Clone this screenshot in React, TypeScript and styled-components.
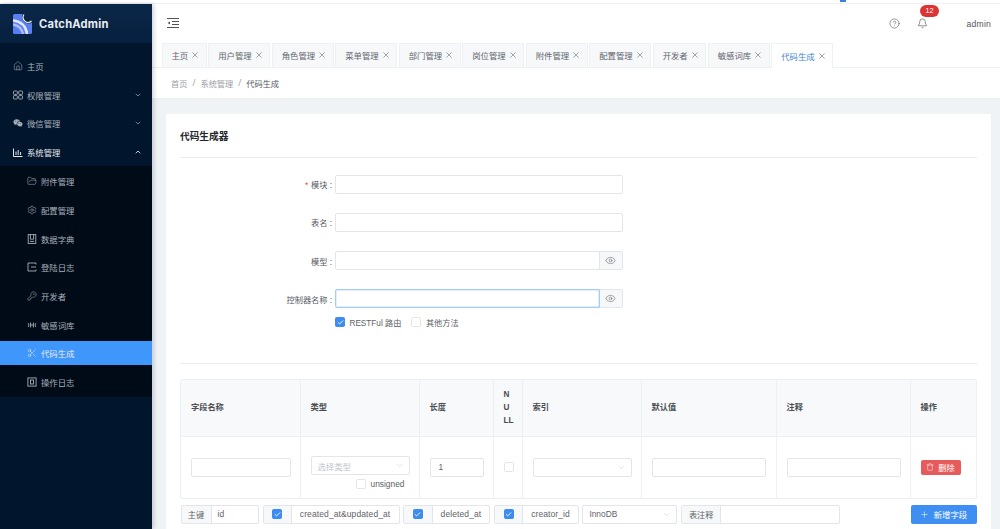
import React from "react";
import styled, { createGlobalStyle } from "styled-components";
import {
  Home, ChevronDown, ChevronUp, FolderOpen, Settings, KeyRound, Scissors,
  CircleHelp, Bell, Eye, Trash, Plus, Check,
} from "lucide-react";
import { RiWechatFill } from "react-icons/ri";

const Global = createGlobalStyle`
  html, body { margin: 0; padding: 0; width: 1000px; height: 529px; overflow: hidden; background: #fff; }
  body { font-family: "Liberation Sans", "Noto Sans CJK SC", sans-serif; font-size: 8.4px; color: #606266; }
  * { box-sizing: border-box; }
`;

const Page = styled.div`
  display: flex; flex-direction: column; width: 1000px; height: 529px; overflow: hidden;
`;
const TopStrip = styled.div`
  position: relative; height: 4px; flex: none; background: #fff; border-bottom: 1px solid #eef1f4;
`;
const TopMark = styled.span`
  position: absolute; left: 840px; top: 0; width: 6px; height: 2px; background: #3f7fdc;
`;
const Body = styled.div`
  flex: 1; display: flex; min-height: 0;
`;
const Sidebar = styled.aside`
  width: 152px; flex: none; background: #01152c; display: flex; flex-direction: column;
  box-shadow: 2px 0 4px rgba(0, 21, 41, .18); z-index: 2;
`;
const Logo = styled.div`
  height: 38.5px; flex: none; display: flex; align-items: center; gap: 7px; padding: 1px 0 0 13px;
  background: linear-gradient(180deg, #0b2747, #06203f);
  color: #e8edf3; font-size: 11.2px; font-weight: 700; letter-spacing: .2px;
  font-family: "Inter", "Liberation Sans", sans-serif;
`;
const Menu = styled.nav`
  display: flex; flex-direction: column; gap: 4.8px; padding-top: 11.4px;
`;
const Item = styled.div<{ $sub?: boolean; $active?: boolean; $open?: boolean }>`
  height: 24px; display: flex; align-items: center; gap: 5px; flex: none;
  padding-left: ${(p) => (p.$sub ? 27 : 13)}px; padding-right: 10px;
  color: ${(p) => (p.$active || p.$open ? "#e6e9ed" : "#a9b0ba")};
  background: ${(p) => (p.$active ? "#3f96fb" : "transparent")};
  svg { flex: none; }
  svg:first-child { width: 10px; height: 10px; margin: 0 -.5px; }
`;
const ItemLabel = styled.span`
  flex: 1; font-size: 8.4px;
`;
const SubMenu = styled.div`
  display: flex; flex-direction: column; gap: 4.7px; padding: 3px 0 3px; margin-top: -2.8px;
  background: #000b18;
`;
const Main = styled.main`
  flex: 1; min-width: 0; display: flex; flex-direction: column; background: #fff;
`;
const Header = styled.header`
  height: 39px; flex: none; display: flex; align-items: center; padding: 0 9px 2px 15px; color: #4f5359;
`;
const HeaderRight = styled.div`
  margin: 2px 0 0 auto; display: flex; align-items: center;
`;
const BellWrap = styled.span`
  position: relative; display: inline-flex; margin: 0 38.5px 0 17.5px;
`;
const Badge = styled.span`
  position: absolute; left: 3px; top: -13px; width: 19px; height: 11.5px; border-radius: 6px;
  background: #dd3333; color: #fff; font-size: 7.4px; display: flex; align-items: center; justify-content: center;
`;
const User = styled.span`
  font-size: 8.6px; color: #53575d; letter-spacing: .2px;
`;
const Tabs = styled.div`
  height: 24.5px; flex: none; display: flex; gap: 1.6px; padding-left: 9.5px;
  border-bottom: 1px solid #eef1f4; background: #fff;
`;
const Tab = styled.div<{ $active?: boolean }>`
  display: flex; align-items: center; gap: 4px; padding: 0 7.4px 0 9px; height: 24.5px;
  background: ${(p) => (p.$active ? "#fff" : "#f6f8fa")};
  border: 1px solid #eef1f4; border-width: 1px 1px ${(p) => (p.$active ? 0 : 1)}px 1px;
  color: ${(p) => (p.$active ? "#3f86d8" : "#61656c")};
  font-size: 8.4px; white-space: nowrap;
  svg { color: #8d9197; flex: none; }
`;
const Crumbs = styled.div`
  height: 31px; flex: none; display: flex; align-items: center; gap: 5px; padding-left: 19px;
  color: #9a9ea5; font-size: 8.2px; border-bottom: 1px solid #eceff3;
`;
const CrumbSep = styled.span`
  font-family: "Noto Sans", sans-serif; line-height: 10px;
`;
const CrumbLast = styled.span`
  color: #55595f;
`;
const Content = styled.div`
  flex: 1; min-height: 0; background: #eff3f6; padding: 15px 9px 0 14px; overflow: hidden;
`;
const Card = styled.section`
  background: #fff; height: 600px; padding: 0 14px;
`;
const CardTitle = styled.h2`
  margin: 0; height: 44.5px; display: flex; align-items: center; padding-top: 1px;
  font-size: 9.7px; font-weight: 700; color: #23262a; border-bottom: 1px solid #ebedf0;
`;
const Form = styled.div`
  display: flex; flex-direction: column; gap: 19.3px; padding: 16.5px 0 0 99.5px;
  height: 206px; border-bottom: 1px solid #ebedf0;
`;
const Row = styled.div`
  display: flex; align-items: center; height: 19px;
`;
const Label = styled.label`
  width: 55.5px; flex: none; text-align: right; padding-right: 3px; white-space: nowrap;
  font-size: 8.2px; color: #55595f;
`;
const Star = styled.span`
  color: #e0555a; margin-right: 3px;
`;
const Input = styled.div<{ $w?: number; $joined?: boolean }>`
  width: ${(p) => (p.$w ? `${p.$w}px` : "287.5px")}; height: 19px; flex: none; background: #fff;
  border: 1px solid #e2e5ea;
  border-radius: ${(p) => (p.$joined ? "2px 0 0 2px" : "2px")};
  display: flex; align-items: center; padding: 0 8px; font-size: 8.4px; color: #5a5e64;
`;
const FocusedInput = styled(Input)`
  border-color: #a3cdf2;
  box-shadow: inset 0 0 0 .5px #c5e0f7;
`;
const EyeAddon = styled.div`
  width: 22.5px; height: 19px; flex: none; background: #f6f8fa; color: #5c6067;
  border: 1px solid #e2e5ea; border-left: 0; border-radius: 0 2px 2px 0;
  display: flex; align-items: center; justify-content: center;
`;
const CheckRow = styled.div`
  display: flex; align-items: center; gap: 4.5px; margin: -11.9px 0 0 55.5px; height: 13px; font-size: 8.2px;
`;
const Box = styled.span<{ $on?: boolean }>`
  width: 10px; height: 10px; flex: none; border-radius: 1.5px; display: inline-flex; align-items: center; justify-content: center;
  background: ${(p) => (p.$on ? "#3f8cf0" : "#fff")}; color: #fff;
  border: 1px solid ${(p) => (p.$on ? "#3f8cf0" : "#e2e5ea")};
`;
const CheckGap = styled.span`
  width: 1px;
`;
const Table = styled.div`
  margin-top: 15px; width: 796.5px; border: 1px solid #edf0f3; border-radius: 2px;
  display: grid; grid-template-columns: 119.5px 119px 74px 29px 119px 135px 134px 66.5px;
`;
const Th = styled.div`
  height: 56.5px; background: #f7f9fb; padding: 0 10px; display: flex; align-items: center;
  font-size: 8.2px; font-weight: 700; color: #4a4d52; line-height: 13px;
  border-right: 1px solid #edf0f3; border-bottom: 1px solid #edf0f3;
  &:last-of-type { border-right: 0; }
`;
const Td = styled.div<{ $last?: boolean }>`
  height: 61.5px; padding: 0 10px; display: flex; flex-direction: column; justify-content: center; align-items: flex-start;
  border-right: ${(p) => (p.$last ? 0 : "1px solid #edf0f3")};
`;
const Select = styled.div<{ $w: number; $tone?: string }>`
  width: ${(p) => p.$w}px; height: 19px; flex: none; border: 1px solid #e2e5ea; border-radius: 2px; background: #fff;
  display: flex; align-items: center; justify-content: space-between; padding: 0 5px 0 6px;
  font-size: 8.4px; color: ${(p) => p.$tone || "#c0c4cc"};
  svg { color: #b4b8bf; }
`;
const Unsigned = styled.div`
  display: flex; align-items: center; gap: 4.5px; align-self: flex-end; margin: 3px 5px 0 0; height: 11px; color: #606266; font-size: 8.4px;
`;
const TypeCell = styled.div`
  display: flex; flex-direction: column; margin-top: 11px;
`;
const DeleteBtn = styled.button`
  width: 40px; height: 15px; padding: 0; border: 0; border-radius: 2px; background: #e65b5b; color: #fff;
  display: flex; align-items: center; justify-content: center; gap: 4px; font: inherit; font-size: 8.2px;
`;
const Bar = styled.div`
  display: flex; align-items: center; gap: 3.6px; margin: 5.5px 0 0 .5px; width: 796px;
`;
const Group = styled.div<{ $w: number }>`
  width: ${(p) => p.$w}px; height: 19px; flex: none; display: flex; border: 1px solid #e2e5ea; border-radius: 2px; overflow: hidden;
`;
const Addon = styled.span<{ $w: number }>`
  width: ${(p) => p.$w}px; flex: none; background: #f6f8fa; border-right: 1px solid #e2e5ea;
  display: flex; align-items: center; justify-content: center; color: #5f6369; font-size: 8.2px;
`;
const GroupText = styled.span<{ $center?: boolean }>`
  flex: 1; display: flex; align-items: center; justify-content: ${(p) => (p.$center ? "center" : "flex-start")};
  padding: 0 6px; font-size: 8.5px; color: #5f6369; letter-spacing: .1px; white-space: nowrap;
`;
const AddBtn = styled.button`
  margin-left: auto; width: 66px; height: 19px; padding: 0; border: 0; border-radius: 2px; background: #3f8ff3; color: #fff;
  display: flex; align-items: center; justify-content: center; gap: 5px; font: inherit; font-size: 8.4px;
`;

const LogoMark = () => (
  <svg width="19" height="20" viewBox="0 0 19 20">
    <rect width="19" height="20" rx="1.5" fill="#5a7ff0" />
    <path d="M0 6.5 C8 7.5 13 12.5 14 20" fill="none" stroke="#dfe8fb" strokeWidth="2.6" />
    <path d="M0 10.5 C5 11.5 9 15 10 20" fill="none" stroke="#aebff5" strokeWidth="2.4" />
    <circle cx="15.5" cy="3" r="6.5" fill="#0a2545" />
    <path d="M11 .5 A5 5 0 0 0 18.5 7" fill="none" stroke="#fff" strokeWidth="1.1" />
  </svg>
);
const GridIcon = () => (
  <svg viewBox="0 0 10 10" fill="none" stroke="currentColor" strokeWidth=".9">
    <rect x=".5" y="1" width="3.8" height="3.4" rx=".7" /><rect x="5.7" y="1" width="3.8" height="3.4" rx=".7" />
    <rect x=".5" y="5.6" width="3.8" height="3.4" rx=".7" /><rect x="5.7" y="5.6" width="3.8" height="3.4" rx=".7" />
  </svg>
);
const ChartIcon = () => (
  <svg viewBox="0 0 10 10" fill="none" stroke="currentColor" strokeWidth="1">
    <path d="M.5 1.5v8h9" /><path d="M3 8V4.5M5.2 8V3M7.6 8V5" />
  </svg>
);
const DictIcon = () => (
  <svg viewBox="0 0 10 10" fill="none" stroke="currentColor" strokeWidth=".9">
    <rect x="1.2" y=".6" width="7.6" height="8.8" /><path d="M3.4 .6v4.6h3.2V.6M3 7.4h4" />
  </svg>
);
const LoginIcon = () => (
  <svg viewBox="0 0 10 10" fill="none" stroke="currentColor" strokeWidth=".9">
    <path d="M9 2.5V1H1v8h8V7.5" /><path d="M4 5h5" />
  </svg>
);
const WordsIcon = () => (
  <svg viewBox="0 0 10 10" fill="none" stroke="currentColor" strokeWidth=".9">
    <path d="M1 3c1.2 1 1.2 3 0 4M3.6 2.5v5M3.6 5h2.8M6.4 2.5v5M9 3c-1.2 1-1.2 3 0 4" />
  </svg>
);
const LogIcon = () => (
  <svg viewBox="0 0 10 10" fill="none" stroke="currentColor" strokeWidth=".9">
    <rect x=".9" y=".9" width="8.2" height="8.2" /><rect x="3.5" y="3" width="3" height="4" />
  </svg>
);
const FoldIcon = () => (
  <svg width="12" height="10" viewBox="0 0 12 10" fill="none" stroke="currentColor" strokeWidth="1">
    <path d="M0 .5h12M5 3.5h7M5 6.5h7M0 9.5h12" />
    <path d="M3 3.4 0.6 5 3 6.6z" fill="currentColor" stroke="none" />
  </svg>
);
const TabClose = () => (
  <svg width="6" height="6" viewBox="0 0 6 6" fill="none" stroke="currentColor" strokeWidth=".8">
    <path d="M.4.4l5.2 5.2M5.6.4.4 5.6" />
  </svg>
);

const ic = { size: 10, strokeWidth: 1.3 };
const tabs = ["主页", "用户管理", "角色管理", "菜单管理", "部门管理", "岗位管理", "附件管理", "配置管理", "开发者", "敏感词库", "代码生成"];
const subs: [string, React.ReactNode][] = [
  ["附件管理", <FolderOpen {...ic} />],
  ["配置管理", <Settings {...ic} />],
  ["数据字典", <DictIcon />],
  ["登陆日志", <LoginIcon />],
  ["开发者", <KeyRound {...ic} />],
  ["敏感词库", <WordsIcon />],
  ["代码生成", <Scissors {...ic} />],
  ["操作日志", <LogIcon />],
];
const heads: React.ReactNode[] = ["字段名称", "类型", "长度", <span>N<br />U<br />LL</span>, "索引", "默认值", "注释", "操作"];
const Tick = () => <Check size={7} strokeWidth={3} />;

export default function App() {
  return (
    <Page>
      <Global />
      <TopStrip><TopMark /></TopStrip>
      <Body>
        <Sidebar>
          <Logo><LogoMark />CatchAdmin</Logo>
          <Menu>
            <Item><Home {...ic} /><ItemLabel>主页</ItemLabel></Item>
            <Item><GridIcon /><ItemLabel>权限管理</ItemLabel><ChevronDown size={8} strokeWidth={2} /></Item>
            <Item><RiWechatFill size={10} /><ItemLabel>微信管理</ItemLabel><ChevronDown size={8} strokeWidth={2} /></Item>
            <Item $open><ChartIcon /><ItemLabel>系统管理</ItemLabel><ChevronUp size={8} strokeWidth={2.6} /></Item>
            <SubMenu>
              {subs.map(([name, icon]) => (
                <Item key={name} $sub $active={name === "代码生成"}>{icon}<ItemLabel>{name}</ItemLabel></Item>
              ))}
            </SubMenu>
          </Menu>
        </Sidebar>
        <Main>
          <Header>
            <FoldIcon />
            <HeaderRight>
              <CircleHelp size={11} strokeWidth={1.3} />
              <BellWrap>
                <Bell size={11} strokeWidth={1.4} />
                <Badge>12</Badge>
              </BellWrap>
              <User>admin</User>
            </HeaderRight>
          </Header>
          <Tabs>
            {tabs.map((t) => (
              <Tab key={t} $active={t === "代码生成"}>{t}<TabClose /></Tab>
            ))}
          </Tabs>
          <Crumbs>首页<CrumbSep>/</CrumbSep>系统管理<CrumbSep>/</CrumbSep><CrumbLast>代码生成</CrumbLast></Crumbs>
          <Content>
            <Card>
              <CardTitle>代码生成器</CardTitle>
              <Form>
                <Row><Label><Star>*</Star>模块 :</Label><Input /></Row>
                <Row><Label>表名 :</Label><Input /></Row>
                <Row><Label>模型 :</Label><Input $w={265} $joined /><EyeAddon><Eye size={11} strokeWidth={1.2} /></EyeAddon></Row>
                <Row><Label>控制器名称 :</Label><FocusedInput $w={265} $joined /><EyeAddon><Eye size={11} strokeWidth={1.2} /></EyeAddon></Row>
                <CheckRow>
                  <Box $on><Tick /></Box>RESTFul 路由<CheckGap />
                  <Box />其他方法
                </CheckRow>
              </Form>
              <Table>
                {heads.map((h, i) => <Th key={i}>{h}</Th>)}
                <Td><Input $w={99.5} /></Td>
                <Td>
                  <TypeCell>
                    <Select $w={99}>选择类型<ChevronDown size={9} strokeWidth={1} /></Select>
                    <Unsigned><Box />unsigned</Unsigned>
                  </TypeCell>
                </Td>
                <Td><Input $w={54}>1</Input></Td>
                <Td><Box /></Td>
                <Td><Select $w={99.5}><span /><ChevronDown size={9} strokeWidth={1} /></Select></Td>
                <Td><Input $w={114} /></Td>
                <Td><Input $w={114} /></Td>
                <Td $last><DeleteBtn><Trash size={8} strokeWidth={1.5} />删除</DeleteBtn></Td>
              </Table>
              <Bar>
                <Group $w={78.5}><Addon $w={30}>主键</Addon><GroupText>id</GroupText></Group>
                <Group $w={137}><Addon $w={28}><Box $on><Tick /></Box></Addon><GroupText $center>created_at&amp;updated_at</GroupText></Group>
                <Group $w={87}><Addon $w={28.5}><Box $on><Tick /></Box></Addon><GroupText $center>deleted_at</GroupText></Group>
                <Group $w={85}><Addon $w={28.5}><Box $on><Tick /></Box></Addon><GroupText $center>creator_id</GroupText></Group>
                <Select $w={95} $tone="#5f6369">InnoDB<ChevronDown size={9} strokeWidth={1} /></Select>
                <Group $w={159}><Addon $w={39.5}>表注释</Addon><GroupText /></Group>
                <AddBtn><Plus size={9} strokeWidth={1.4} />新增字段</AddBtn>
              </Bar>
            </Card>
          </Content>
        </Main>
      </Body>
    </Page>
  );
}
